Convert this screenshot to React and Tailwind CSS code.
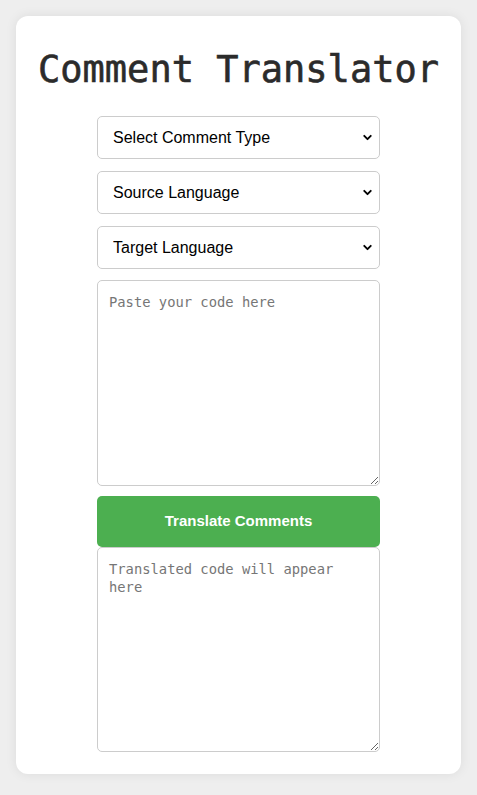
import { ChevronDown } from "lucide-react";

const selects = ["Select Comment Type", "Source Language", "Target Language"];

function SelectBox({ label, className }) {
  return (
    <div className={`relative ${className}`}>
      <select
        defaultValue=""
        className="w-full h-[43px] appearance-none rounded-[5px] border border-[#cccccc] bg-white pl-[15px] pr-8 text-[16px] text-black outline-none"
        style={{ fontFamily: '"Liberation Sans", Arial, sans-serif' }}
      >
        <option value="">{label}</option>
      </select>
      <ChevronDown
        size={13}
        strokeWidth={3.5}
        className="pointer-events-none absolute right-[6px] top-[15px] text-black"
      />
    </div>
  );
}

const App = () => {
  const mono = { fontFamily: '"DejaVu Sans Mono", "Liberation Mono", monospace' };

  return (
    <div className="min-h-[795px] bg-[#eeeeee] px-4 pt-4 pb-[21px]">
      <div className="rounded-[12px] bg-white pt-[32px] pb-[22px] shadow-[0_0_12px_rgba(0,0,0,0.08)]">
        <h1
          className="text-center text-[37px] leading-[43px] text-[#2b2b2b] [-webkit-text-stroke:0.6px_#2b2b2b]"
          style={mono}
        >
          Comment Translator
        </h1>

        <div className="mx-auto mt-[25px] flex w-[283px] flex-col">
          {selects.map((label, i) => (
            <SelectBox
              key={label}
              label={label}
              className={i < 2 ? "mb-[12px]" : "mb-[11px]"}
            />
          ))}

          <textarea
            placeholder="Paste your code here"
            className="block h-[206px] w-full rounded-[5px] border border-[#cccccc] px-[11px] pt-[12px] text-[13.8px] leading-[18px] text-black outline-none placeholder:text-[#767676]"
            style={mono}
          />

          <button
            className="mt-[10px] h-[51px] w-full rounded-[5px] bg-[#4caf50] text-[15px] font-bold text-white"
            style={{ fontFamily: '"Liberation Sans", Arial, sans-serif' }}
          >
            Translate Comments
          </button>

          <textarea
            readOnly
            placeholder="Translated code will appear here"
            className="block h-[205px] w-full rounded-[5px] border border-[#cccccc] px-[11px] pt-[12px] text-[13.8px] leading-[18px] text-black outline-none placeholder:text-[#767676]"
            style={mono}
          />
        </div>
      </div>
    </div>
  );
};

export default App;
